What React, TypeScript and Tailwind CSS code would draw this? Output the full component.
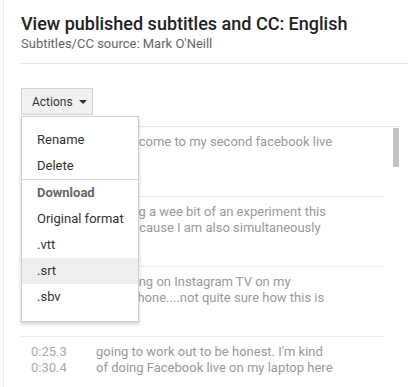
import React from 'react';

const rows = [
  { start: '0:00.0', end: '0:05.1', lines: ['OK, welcome to my second facebook live', ''] },
  { start: '0:05.1', end: '0:10.2', lines: ['so doing a wee bit of an experiment this', 'time because I am also simultaneously'] },
  { start: '0:15.2', end: '0:20.3', lines: ['and going on Instagram TV on my', 'smartphone....not quite sure how this is'] },
  { start: '0:25.3', end: '0:30.4', lines: ["going to work out to be honest. I'm kind", 'of doing Facebook live on my laptop here'] },
];

const menuItems = ['Original format', '.vtt', '.srt', '.sbv'];

export default function App() {
  return (
    <div className="relative h-[387px] w-[408px] overflow-hidden bg-white font-['Roboto','Liberation_Sans',sans-serif]">
      <div className="ml-[3px] h-full border-l border-[#ebebeb] pl-[17px]">
        <h1 className="pt-[12px] text-[18px] font-medium leading-[24px] text-[#222]">
          View published subtitles and CC: English
        </h1>
        <p className="text-[13px] leading-[16px] text-[#666]">Subtitles/CC source: Mark O'Neill</p>
        <div className="mt-[11px] border-t border-[#e5e5e5]" />

        <button className="mt-[24px] flex h-[27px] w-[72px] items-center gap-[6px] border border-[#d3d3d3] bg-[#f1f1f1] pl-[10px] text-[12px] text-[#333]">
          Actions
          <span className="h-0 w-0 border-x-[4px] border-t-[4px] border-x-transparent border-t-[#333]" />
        </button>

        <div className="mt-[11px] flex w-[379px] border-t border-[#e5e5e5]">
          <div className="w-[364px]">
            {rows.map((row, i) => (
              <div key={i} className="flex h-[70px] border-b border-[#ececec] pl-[10px] pt-[7px] text-[13px] leading-[16px]">
                <div className="w-[65px] text-[#aaa]">
                  <div>{row.start}</div>
                  <div>{row.end}</div>
                </div>
                <div className="whitespace-nowrap text-[#9a9a9a]">
                  <div>{row.lines[0]}</div>
                  <div>{row.lines[1]}</div>
                </div>
              </div>
            ))}
          </div>
          <div className="ml-[8px] mt-[1px] h-[39px] w-[6px] bg-[#c1c1c1]" />
        </div>
      </div>

      {/* dropdown menu */}
      <div className="absolute left-[21px] top-[116px] h-[206px] w-[118px] border border-[#d0d0d0] bg-white pb-[12px] pt-[10px] text-[13px] text-[#333] shadow-[0_2px_4px_rgba(0,0,0,0.2)]">
        <div className="flex h-[26px] items-center pl-[15px]">Rename</div>
        <div className="flex h-[26px] items-center pl-[15px]">Delete</div>
        <div className="border-t border-[#d6d6d6]" />
        <div className="flex h-[26px] items-center pl-[15px] font-bold text-[#666]">Download</div>
        {menuItems.map((item) => (
          <div
            key={item}
            className={
              item === '.srt'
                ? 'flex h-[26px] items-center bg-[#eeeeee] pl-[15px]'
                : 'flex h-[26px] items-center pl-[15px]'
            }
          >
            {item}
          </div>
        ))}
      </div>
    </div>
  );
}
